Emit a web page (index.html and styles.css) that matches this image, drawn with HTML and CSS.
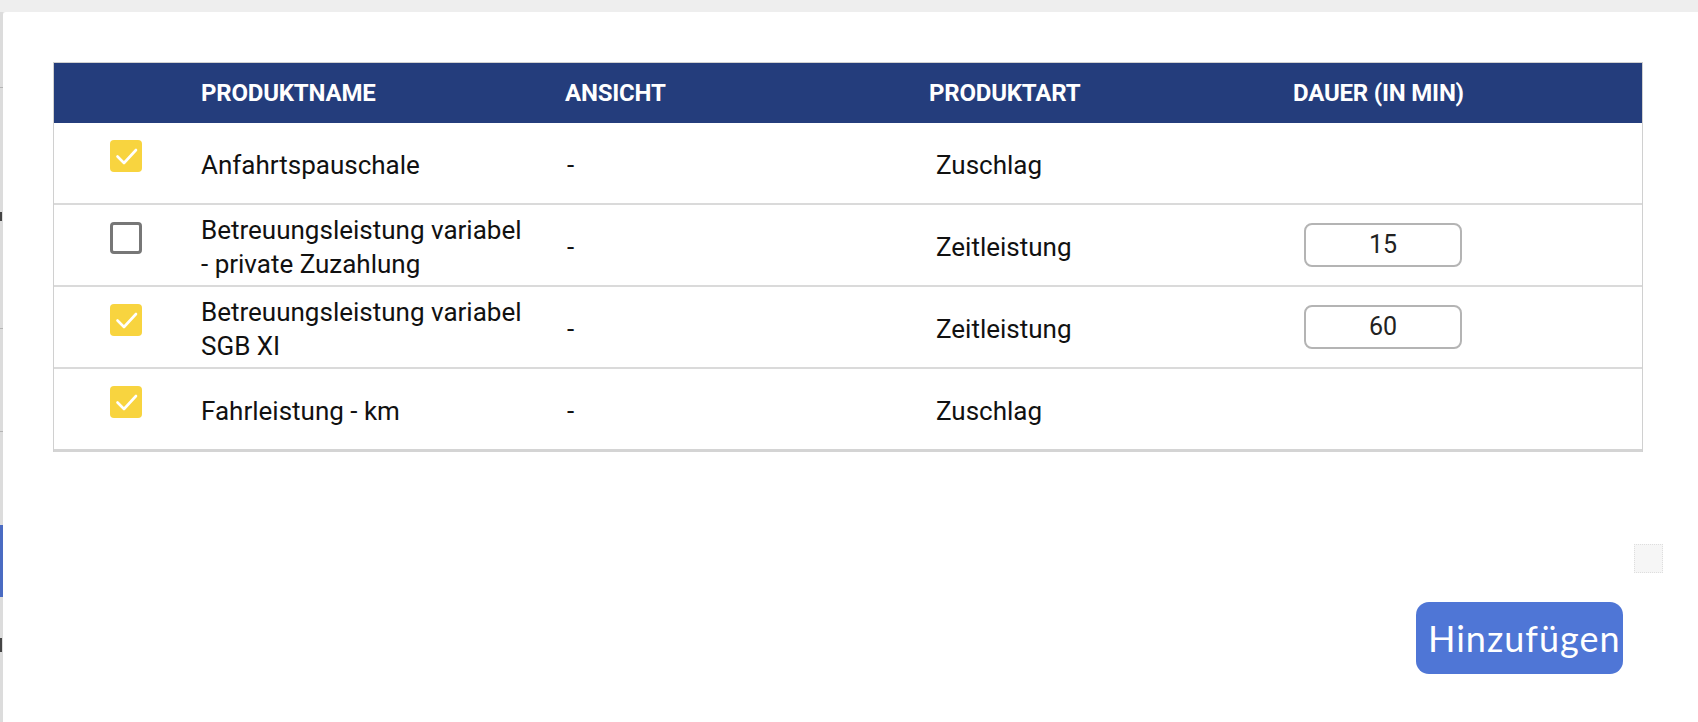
FILE: index.html
```html
<!DOCTYPE html>
<html lang="de">
<head>
<meta charset="utf-8">
<title>Produkte hinzufügen</title>
<link rel="stylesheet" href="styles.css">
</head>
<body>
<div class="topbar"></div>
<div class="stage">
  <div class="backdrop-edge">
    <span class="edge-mark edge-chev"></span>
    <span class="edge-line l1"></span>
    <span class="edge-line l2"></span>
    <span class="edge-line l3"></span>
    <span class="edge-blue"></span>
    <span class="edge-mark edge-glyph"></span>
  </div>
  <div class="modal">
    <div class="table">
      <div class="row head">
        <div class="cell"></div>
        <div class="cell">PRODUKTNAME</div>
        <div class="cell">ANSICHT</div>
        <div class="cell">PRODUKTART</div>
        <div class="cell">DAUER (IN MIN)</div>
      </div>
      <div class="row">
        <div class="cell check-cell"><span class="cb on"><svg viewBox="0 0 32 32"><path d="M7.5 16.5 L14 23 L26 10"/></svg></span></div>
        <div class="cell name">Anfahrtspauschale</div>
        <div class="cell view">-</div>
        <div class="cell type">Zuschlag</div>
        <div class="cell dur"></div>
      </div>
      <div class="row">
        <div class="cell check-cell"><span class="cb off"></span></div>
        <div class="cell name">Betreuungsleistung variabel<br>- private Zuzahlung</div>
        <div class="cell view">-</div>
        <div class="cell type">Zeitleistung</div>
        <div class="cell dur"><span class="num">15</span></div>
      </div>
      <div class="row">
        <div class="cell check-cell"><span class="cb on"><svg viewBox="0 0 32 32"><path d="M7.5 16.5 L14 23 L26 10"/></svg></span></div>
        <div class="cell name">Betreuungsleistung variabel<br>SGB XI</div>
        <div class="cell view">-</div>
        <div class="cell type">Zeitleistung</div>
        <div class="cell dur"><span class="num">60</span></div>
      </div>
      <div class="row last">
        <div class="cell check-cell"><span class="cb on"><svg viewBox="0 0 32 32"><path d="M7.5 16.5 L14 23 L26 10"/></svg></span></div>
        <div class="cell name">Fahrleistung - km</div>
        <div class="cell view">-</div>
        <div class="cell type">Zuschlag</div>
        <div class="cell dur"></div>
      </div>
    </div>
    <div class="footer">
      <span class="handle"></span>
      <button class="add-btn" type="button">Hinzufügen</button>
    </div>
  </div>
</div>
</body>
</html>
```

FILE: styles.css
```css
* { box-sizing: border-box; }

html, body {
  margin: 0;
  padding: 0;
  height: 100%;
  overflow: hidden;
}

body {
  background: #e4e4e4;
  font-family: Roboto, "Liberation Sans", sans-serif;
  color: #111;
}

.topbar {
  height: 12px;
  background: #eeeeee;
}

.stage {
  display: flex;
  height: 710px;
}

.backdrop-edge {
  position: relative;
  width: 3px;
  flex: none;
  background: #dcdcdc;
}

.edge-line {
  position: absolute;
  left: 0;
  width: 3px;
  height: 1px;
  background: #b5b5b5;
}
.edge-line.l1 { top: 75px; }
.edge-line.l2 { top: 316px; }
.edge-line.l3 { top: 419px; }

.edge-blue {
  position: absolute;
  left: 0;
  top: 513px;
  width: 3px;
  height: 72px;
  background: #4a6bc2;
}

.edge-mark {
  position: absolute;
  left: 0;
  width: 2px;
  background: #444;
}
.edge-chev { top: 200px; height: 9px; }
.edge-glyph { top: 626px; height: 14px; }

.modal {
  flex: 1;
  background: #fff;
  border-top-left-radius: 3px;
  padding: 50px 55px 0 50px;
}

.table {
  width: 1590px;
  border: 1px solid #d0d0d0;
  border-bottom: 0;
}

.row {
  display: grid;
  grid-template-columns: 132px repeat(4, 1fr);
  height: 82px;
  border-bottom: 2px solid #dadada;
  font-size: 26px;
  line-height: 34px;
}

.row.last {
  height: 83px;
  border-bottom: 3px solid #d4d4d4;
}

.row.head {
  height: 60px;
  border-bottom: 0;
  background: #243d7c;
  color: #fff;
  font-weight: 700;
  font-size: 24px;
  letter-spacing: -0.2px;
}

.cell {
  display: flex;
  align-items: center;
  padding-left: 15px;
}

.row:not(.head) .cell { padding-top: 3px; }

.check-cell {
  align-items: flex-start;
  padding-left: 56px;
  padding-top: 17px !important;
}

.cb {
  display: block;
  width: 32px;
  height: 32px;
  border-radius: 4px;
}

.cb.on {
  background: #f8d43f;
}

.cb.on svg {
  display: block;
  width: 32px;
  height: 32px;
  fill: none;
  stroke: #fff;
  stroke-width: 2.6;
  stroke-linecap: round;
  stroke-linejoin: round;
}

.cb.off {
  border: 3px solid #777;
  background: #fff;
}

.view { padding-left: 17px; }
.type { padding-left: 22px; }
.dur { padding-left: 26px; }

.num {
  display: flex;
  align-items: center;
  justify-content: center;
  width: 158px;
  height: 44px;
  border: 2px solid #b4b4b4;
  border-radius: 8px;
  font-size: 25px;
  color: #222;
  margin-top: -3px;
}

.footer {
  display: flex;
  flex-direction: column;
  align-items: flex-end;
  width: 1590px;
}

.handle {
  display: block;
  width: 29px;
  height: 29px;
  margin-top: 92px;
  margin-right: -20px;
  background: #f6f6f6;
  border: 1px dotted #dedede;
}

.add-btn {
  margin-top: 29px;
  margin-right: 20px;
  width: 207px;
  height: 72px;
  padding: 0 0 0 12px;
  border: 0;
  border-radius: 13px;
  background: #4f76d6;
  color: #fff;
  font-family: Lato, "Noto Sans", sans-serif;
  font-size: 36px;
  font-weight: 400;
  letter-spacing: 1px;
  text-align: left;
  white-space: nowrap;
  overflow: hidden;
}
```
